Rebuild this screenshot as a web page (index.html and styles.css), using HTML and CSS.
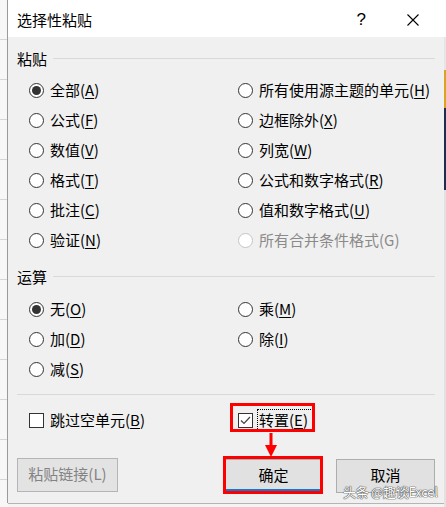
FILE: index.html
```html
<!DOCTYPE html>
<html lang="zh-CN">
<head>
    <meta charset="UTF-8">
    <meta name="viewport" content="width=device-width, initial-scale=1.0">
    <title>选择性粘贴</title>
    <link rel="stylesheet" href="styles.css">
</head>
<body>

<div class="screen">
    <div class="sheet-left"></div>

    <div class="dialog">
        <div class="titlebar">
            <span class="title">选择性粘贴</span>
            <span class="help">?</span>
            <svg class="close" width="12" height="12" viewBox="0 0 12 12">
                <path d="M0.5 0.5 L11.5 11.5 M11.5 0.5 L0.5 11.5" stroke="#000" stroke-width="1.1" fill="none"/>
            </svg>
        </div>

        <div class="content">
            <div class="legend"><span>粘贴</span><div class="legend-line"></div></div>
            <div class="options">
                <label class="opt"><span class="radio checked"></span>全部(<u>A</u>)</label>
                <label class="opt"><span class="radio"></span>所有使用源主题的单元(<u>H</u>)</label>
                <label class="opt"><span class="radio"></span>公式(<u>F</u>)</label>
                <label class="opt"><span class="radio"></span>边框除外(<u>X</u>)</label>
                <label class="opt"><span class="radio"></span>数值(<u>V</u>)</label>
                <label class="opt"><span class="radio"></span>列宽(<u>W</u>)</label>
                <label class="opt"><span class="radio"></span>格式(<u>T</u>)</label>
                <label class="opt"><span class="radio"></span>公式和数字格式(<u>R</u>)</label>
                <label class="opt"><span class="radio"></span>批注(<u>C</u>)</label>
                <label class="opt"><span class="radio"></span>值和数字格式(<u>U</u>)</label>
                <label class="opt"><span class="radio"></span>验证(<u>N</u>)</label>
                <label class="opt disabled"><span class="radio"></span>所有合并条件格式(G)</label>
            </div>

            <div class="legend ops-legend"><span>运算</span><div class="legend-line"></div></div>
            <div class="options ops">
                <label class="opt"><span class="radio checked"></span>无(<u>O</u>)</label>
                <label class="opt"><span class="radio"></span>乘(<u>M</u>)</label>
                <label class="opt"><span class="radio"></span>加(<u>D</u>)</label>
                <label class="opt"><span class="radio"></span>除(<u>I</u>)</label>
                <label class="opt"><span class="radio"></span>减(<u>S</u>)</label>
            </div>

            <div class="separator"></div>

            <div class="options checks">
                <label class="opt"><span class="checkbox"></span>跳过空单元(<u>B</u>)</label>
                <label class="opt marked">
                    <span class="checkbox">
                        <svg width="13" height="13" viewBox="0 0 13 13">
                            <polyline points="2,6.5 5,9.5 11,3" stroke="#444" stroke-width="1.2" fill="none"/>
                        </svg>
                    </span>
                    <span class="focus">转置(<u>E</u>)</span>
                </label>
            </div>

            <div class="buttons">
                <button class="btn" disabled>粘贴链接(L)</button>
                <button class="btn default">确定</button>
                <button class="btn">取消</button>
            </div>
        </div>

        <!-- annotation arrow from the checkbox to the OK button -->
        <svg class="arrow" width="14" height="24" viewBox="0 0 14 24">
            <rect x="5.5" y="0" width="3" height="13" fill="#f00"/>
            <polygon points="1,12 13,12 7,24" fill="#f00"/>
        </svg>
    </div>

    <div class="sheet-right"></div>

    <div class="watermark">头条 @趣谈Excel</div>
</div>

</body>
</html>
```

FILE: styles.css
```css
body {
    margin: 0;
    font-family: "Noto Sans CJK SC", "Noto Sans", sans-serif;
    font-size: 15px;
    color: #000;
}
.screen {
    position: relative;
    display: flex;
    width: 446px;
    height: 507px;
    overflow: hidden;
    background: #f4f4f4;
}
.sheet-left {
    width: 8px;
    flex: none;
    background: repeating-linear-gradient(180deg, #f7f7f7 0, #f7f7f7 39px, #d6d6d6 39px, #d6d6d6 40px);
}
.sheet-right {
    width: 2px;
    flex: none;
    background: linear-gradient(180deg, #fff 0, #fff 37px, #e6e6e6 37px, #e6e6e6 70px, #d9a521 70px, #d9a521 108px, #1e2c52 108px, #1e2c52 190px, #e2e2e2 190px);
}
.dialog {
    position: relative;
    width: 436px;
    height: 503px;
    flex: none;
    background: #f0f0f0;
    box-shadow: -1px 0 0 #9a9a9a, 0 1px 0 #b5b5b5;
}
.titlebar {
    display: flex;
    align-items: center;
    height: 37px;
    padding: 0 25px 0 9px;
    background: #fff;
}
.title {
    line-height: 20px;
    margin-top: 3px;
}
.help {
    margin-left: auto;
    margin-right: 41px;
    font-family: "Liberation Sans", sans-serif;
    font-size: 17px;
    margin-top: 2px;
}
.close {
    margin-top: 3px;
}
.content {
    padding: 12px 9px 0 9px;
}
.legend {
    display: flex;
    align-items: center;
    height: 20px;
    line-height: 20px;
}
.legend-line {
    flex: 1;
    height: 1px;
    margin-left: 6px;
    margin-top: -1px;
    background: #d9d9d9;
}
.options {
    display: grid;
    grid-template-columns: 209px 1fr;
    grid-auto-rows: 30px;
    margin-top: 6px;
    padding-left: 12px;
}
.ops-legend {
    margin-top: 12px;
}
.options.ops {
    margin-top: 7px;
}
.opt {
    display: flex;
    align-items: center;
    line-height: 20px;
    white-space: nowrap;
}
.opt u {
    text-underline-offset: 2px;
}
.opt.disabled {
    color: #8a8a8a;
}
.radio {
    position: relative;
    width: 15px;
    height: 15px;
    margin-right: 6px;
    border: 1px solid #333;
    border-radius: 50%;
    background: #fff;
    box-sizing: border-box;
    flex: none;
}
.opt.disabled .radio {
    border-color: #c4c4c4;
}
.radio.checked::after {
    content: "";
    position: absolute;
    top: 2px;
    left: 2px;
    width: 9px;
    height: 9px;
    border-radius: 50%;
    background: #333;
}
.separator {
    height: 1px;
    margin-top: 10px;
    background: #d9d9d9;
}
.options.checks {
    margin-top: 10px;
}
.checkbox {
    display: flex;
    width: 15px;
    height: 15px;
    margin-right: 6px;
    border: 1px solid #333;
    background: #fff;
    box-sizing: border-box;
    flex: none;
}
.marked {
    position: relative;
}
.marked .checkbox {
    margin-right: 4px;
}
.focus {
    padding: 0 4px 0 1px;
    border: 1px dotted #000;
}
.marked::after {
    content: "";
    position: absolute;
    left: -8px;
    top: -2px;
    width: 85px;
    height: 29px;
    border: 3px solid #f00;
    box-sizing: border-box;
}
.buttons {
    display: flex;
    gap: 13px;
    margin-top: 24px;
}
.btn {
    width: 99px;
    height: 34px;
    padding: 0 0 2px 0;
    font-family: inherit;
    font-size: 15px;
    line-height: 18px;
    color: #000;
    background: #e1e1e1;
    border: 1px solid #adadad;
}
.btn:disabled {
    width: 101px;
    margin-top: -1px;
    margin-right: auto;
    color: #838383;
    background: #e3e3e3;
    border-color: #b5b5b5;
}
.btn.default {
    position: relative;
}
.btn.default::after {
    content: "";
    position: absolute;
    left: -2px;
    top: -4px;
    width: 100px;
    height: 38px;
    border: 3px solid #f00;
    box-sizing: border-box;
    box-shadow: inset 0 -2px 0 #1478d2;
}
.arrow {
    position: absolute;
    left: 256px;
    top: 433px;
}
.watermark {
    position: absolute;
    left: 343px;
    top: 485px;
    font-size: 13px;
    line-height: 14px;
    color: #fff;
    letter-spacing: -0.3px;
    text-shadow: 0 0 1px #444, 0 0 1px #444, 0 0 1px #444;
}
```
